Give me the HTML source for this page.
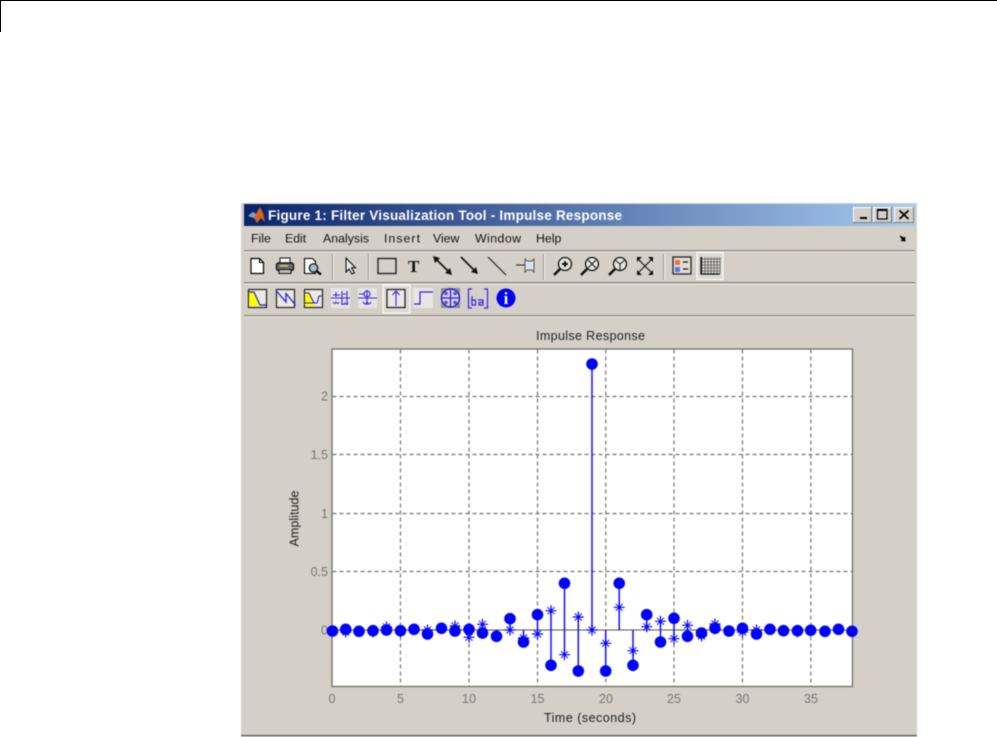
<!DOCTYPE html>
<html><head><meta charset="utf-8"><style>
html,body{margin:0;padding:0;background:#fff;width:997px;height:737px;overflow:hidden}
svg{display:block;filter:blur(0.5px)}
text{font-family:"Liberation Sans",sans-serif}
.k{position:absolute;background:#000;left:0;top:0}
</style></head><body>
<svg width="997" height="737" viewBox="0 0 997 737" xmlns="http://www.w3.org/2000/svg">
<defs>
<linearGradient id="t" x1="0" x2="1" y1="0" y2="0"><stop offset="0" stop-color="#0a246a"/><stop offset="1" stop-color="#a6caf0"/></linearGradient>
<g id="a"><path d="M-5.500 0H5.500M0 -5.500V5.500" stroke="#0000ff" stroke-width="1.200" fill="none"/><path d="M-3.500 -3.500L3.500 3.500M3.500 -3.500L-3.500 3.500" stroke="#0000ff" stroke-width="1" fill="none"/></g>
</defs>
<rect x="241" y="203" width="676" height="534" fill="#d4d0c8"/>
<rect x="244" y="204" width="671" height="22" fill="url(#t)"/>
<!-- logo -->
<rect x="246" y="206" width="19" height="18" fill="#0a246a"/>
<path d="M248 216 L253 212 L256 214 L260 207 L263 213 L265 222 L261 218 L257 223 L254 218 Z" fill="#d8641c"/>
<path d="M248 216 L253 212 L256 214 L254 218 Z" fill="#7f9fd0"/>
<text x="268" y="220" font-size="13.500" font-weight="bold" fill="#fff" textLength="354" lengthAdjust="spacing">Figure 1: Filter Visualization Tool - Impulse Response</text>
<!-- window buttons -->
<g>
<rect x="853" y="207" width="19" height="16" fill="#808080"/><rect x="853" y="207" width="18" height="15" fill="#fff"/><rect x="854" y="208" width="17" height="14" fill="#d4d0c8"/><rect x="860" y="217" width="7" height="2" fill="#000"/>
<rect x="873" y="207" width="19" height="16" fill="#808080"/><rect x="873" y="207" width="18" height="15" fill="#fff"/><rect x="874" y="208" width="17" height="14" fill="#d4d0c8"/><rect x="877.500" y="209.500" width="9.500" height="9.500" fill="none" stroke="#000" stroke-width="1.200"/><rect x="877" y="209" width="10" height="2" fill="#000"/>
<rect x="894" y="207" width="20" height="16" fill="#808080"/><rect x="894" y="207" width="19" height="15" fill="#fff"/><rect x="895" y="208" width="18" height="14" fill="#d4d0c8"/><path d="M899.500 210.500l9 8.500M908.500 210.500l-9 8.500" stroke="#000" stroke-width="1.700"/>
</g>
<!-- menu -->
<g font-size="12.300" fill="#111">
<text x="251" y="242.300">File</text><text x="285" y="242.300">Edit</text><text x="323" y="242.300" textLength="46" lengthAdjust="spacing">Analysis</text><text x="384" y="242.300" textLength="36" lengthAdjust="spacing">Insert</text><text x="433" y="242.300">View</text><text x="475" y="242.300" textLength="46" lengthAdjust="spacing">Window</text><text x="536" y="242.300">Help</text>
</g>
<path d="M900 235.500l4 2 1-1 .5 5-5-.5 1.500-1.500-2-2.500z" fill="#000"/>
<!-- separators -->
<rect x="244" y="250" width="671" height="1.300" fill="#85827c"/><rect x="244" y="251.300" width="671" height="1" fill="#eeece6"/>
<rect x="244" y="282" width="671" height="1.300" fill="#85827c"/><rect x="244" y="283.500" width="671" height="1" fill="#f4f2ec"/>
<rect x="244" y="315" width="671" height="1.300" fill="#85827c"/><rect x="244" y="316.300" width="671" height="1" fill="#eeece6"/>
<rect x="241" y="735" width="676" height="1.200" fill="#55544f"/>
<rect x="332" y="254" width="1" height="26" fill="#96938c"/><rect x="333" y="254" width="1" height="26" fill="#f5f3ee"/>
<rect x="368" y="254" width="1" height="26" fill="#96938c"/><rect x="369" y="254" width="1" height="26" fill="#f5f3ee"/>
<rect x="543" y="254" width="1" height="26" fill="#96938c"/><rect x="544" y="254" width="1" height="26" fill="#f5f3ee"/>
<rect x="663" y="254" width="1" height="26" fill="#96938c"/><rect x="664" y="254" width="1" height="26" fill="#f5f3ee"/>
<!-- toolbar 1 -->
<path d="M251 258.500h8.500l4 4v11h-12.500z" fill="#fff" stroke="#000" stroke-width="1.200"/><path d="M259.500 258.500v4h4" fill="none" stroke="#000"/>
<g stroke="#111"><rect x="280" y="258" width="10" height="6" fill="#fff"/><rect x="276.500" y="263" width="17" height="7.500" rx="2" fill="#6e6e6e" stroke-width="1.400"/><rect x="279" y="269.500" width="12" height="4" fill="#bbb"/></g><rect x="280" y="265" width="8" height="1.500" fill="#e6d040"/>
<path d="M304.500 258.500h8l3 3v12h-11z" fill="#fff" stroke="#000" stroke-width="1.100"/><circle cx="313.500" cy="268" r="4.200" fill="#a0c4cc" stroke="#222" stroke-width="1.400"/><path d="M316.500 271l4.500 3.500" stroke="#000" stroke-width="2.200"/>
<path d="M346 258l0 14 3-3 3 5 2.500-1.200-3-5 4 0z" fill="#e8e8e8" stroke="#000" stroke-width="1"/>
<rect x="378" y="258.500" width="18" height="15" fill="none" stroke="#222" stroke-width="1.400"/>
<text x="408" y="272" style="font-family:'Liberation Serif',serif" font-size="17" font-weight="bold" fill="#111">T</text>
<g stroke="#111" fill="#111"><path d="M434 257l17 17" stroke-width="1.600"/><path d="M433 256l7 2-5 5zM452 275l-7-2 5-5z" stroke="none"/>
<path d="M461 257l16 16" stroke-width="1.600"/><path d="M478 274l-7-2 5-5z" stroke="none"/>
<path d="M488 257l18 18" stroke-width="1.200" stroke="#222"/></g>
<path d="M516 265h10" stroke="#222"/><path d="M525 259l2 2h5l2-2v13l-2-2h-5l-2 2z" fill="#dde4ee" stroke="#555"/>
<g fill="none" stroke="#111"><circle cx="565" cy="264" r="6.500" stroke-width="1.300" fill="#e8e6e0"/><path d="M560 269l-6 6" stroke-width="2.600"/><path d="M562 264h6M565 261v6" stroke-width="1.900"/>
<circle cx="592" cy="264" r="6.500" stroke-width="1.300" fill="#e8e6e0"/><path d="M587 269l-6 6" stroke-width="2.600"/><path d="M588 260l8 8M596 260l-8 8"/>
<circle cx="620" cy="264" r="6.500" stroke-width="1.300" fill="#e8e6e0"/><path d="M615 269l-6 6" stroke-width="2.600"/><path d="M620 264v6M620 264l-5-4M620 264l5-4"/>
<path d="M637 258l16 16M653 258l-16 16" stroke-width="1.100"/></g>
<path d="M637 257h5l-5 5zM653 257h-5l5 5zM637 275h5l-5-5zM653 275h-5l5-5z" fill="#111"/>
<!-- legend -->
<rect x="673" y="257" width="18" height="17" fill="#e0ddd6" stroke="#222" stroke-width="1.300"/><rect x="675" y="260" width="5" height="5" fill="#e8743c"/><rect x="675" y="267" width="5" height="5" fill="#5c74d8"/><path d="M683 262h5M683 269h5" stroke="#111" stroke-width="1.200"/>
<!-- grid button -->
<rect x="697" y="252.500" width="26" height="27" fill="#dedbd4" stroke="#fff"/>
<g stroke="#555" stroke-width=".8"><path d="M702 257v16M705 257v16M708 257v16M711 257v16M714 257v16M717 257v16M720 257v16M701 259h19M701 262h19M701 265h19M701 268h19M701 271h19"/></g><path d="M701 257v17h19" fill="none" stroke="#000" stroke-width="1.300"/>
<!-- toolbar 2 -->
<rect x="248.500" y="289.500" width="18" height="18" fill="#ece9e2" stroke="#222" stroke-width="1.200"/><path d="M249 292h5l6 14h-11z" fill="#ffff00"/><path d="M249 292h5l6 13h6" fill="none" stroke="#2222d0" stroke-width="1.200"/>
<rect x="276.500" y="289.500" width="18" height="18" fill="#ece9e2" stroke="#222" stroke-width="1.200"/><path d="M276 290.500l10 11.500v-8.500l9.500 11.500" fill="none" stroke="#2222d0" stroke-width="1.300"/>
<rect x="304.500" y="289.500" width="18" height="18" fill="#ece9e2" stroke="#222" stroke-width="1.200"/><path d="M305 292h4l6 14h-10z" fill="#ffff00"/><path d="M305 293h4l5 10h3l2-7h3M305 303h9" fill="none" stroke="#2222d0" stroke-width="1.100"/>
<rect x="331" y="288" width="19" height="20" fill="#e6e4e2"/>
<g stroke="#3a22e8" fill="none" stroke-width="1.100"><path d="M331 298h19M342 291v14M347 291v14M336 292v5M333 295h7M343 294h3M333 302q2 3 3 0q2 3 3 0M342 303q2 3 3 0q2 3 3 0"/></g>
<rect x="358" y="288" width="19" height="20" fill="#e6e4e2"/>
<g stroke="#3a22e8" fill="none" stroke-width="1.100"><path d="M358 298h19M367 290v15M359 294h6M364 294a3 3 0 1 0 6 0a3 3 0 1 0-6 0M363 302q2 4 4 0q2 4 4 0"/></g>
<rect x="383" y="285" width="27" height="28" fill="#dedbd4" stroke="#fff"/><rect x="387" y="289.500" width="18" height="18" fill="#ece9e2" stroke="#222" stroke-width="1.300"/><path d="M396 306v-15M392.500 295l3.500-4 3.500 4" fill="none" stroke="#3a22e8" stroke-width="1.100"/>
<rect x="413" y="288" width="20" height="20" fill="#e8e6e2"/><path d="M414 304h6v-12h13" fill="none" stroke="#3a22e8" stroke-width="1.300"/>
<rect x="441" y="288" width="19" height="20" fill="#8f8f8f"/><circle cx="450.500" cy="298" r="9" fill="#d8d6f0" stroke="#2a18e0" stroke-width="1.400"/><path d="M450.500 289v18M441.500 298h18" stroke="#2a18e0" stroke-width="1.300"/><g fill="#5a50b0"><circle cx="446" cy="293.500" r="1.800"/><circle cx="455" cy="293.500" r="1.800"/><circle cx="446" cy="302.500" r="1.800"/><circle cx="455" cy="302.500" r="1.800"/></g>
<g fill="none" stroke="#3a22e8" stroke-width="1.200"><path d="M472 289h-3.500v19h3.500M484 289h3.500v19h-3.500"/><path d="M472 296v9h3.500v-5h-3.500M478 300h5v5h-4v-2.500h4"/></g>
<circle cx="506" cy="298" r="9.500" fill="#0000f0"/><text x="506" y="304" font-size="17" font-weight="bold" fill="#fff" text-anchor="middle" style="font-family:'Liberation Serif',serif">i</text>
<!-- axes -->
<text x="536" y="340" font-size="12.500" fill="#222" textLength="109" lengthAdjust="spacing">Impulse Response</text>
<rect x="332" y="349" width="520.500" height="337.500" fill="#fff" stroke="#77766f" stroke-width="1.400"/>
<g font-size="12.500" fill="#77766f">
<text x="328" y="400.500" text-anchor="end">2</text>
<text x="328" y="459" text-anchor="end">1.5</text>
<text x="328" y="518" text-anchor="end">1</text>
<text x="328" y="576" text-anchor="end">0.5</text>
<text x="328" y="634.500" text-anchor="end">0</text>
<text x="332" y="703" text-anchor="middle">0</text>
<text x="400.500" y="703" text-anchor="middle">5</text>
<text x="469" y="703" text-anchor="middle">10</text>
<text x="537.500" y="703" text-anchor="middle">15</text>
<text x="606" y="703" text-anchor="middle">20</text>
<text x="674" y="703" text-anchor="middle">25</text>
<text x="742.500" y="703" text-anchor="middle">30</text>
<text x="811" y="703" text-anchor="middle">35</text>
</g>
<text x="544" y="722" font-size="12.500" fill="#222" textLength="92" lengthAdjust="spacing">Time (seconds)</text>
<text transform="translate(298.500 518.500) rotate(-90)" font-size="12.500" fill="#222" text-anchor="middle" textLength="56" lengthAdjust="spacing">Amplitude</text>
<path d="M400.500 349.500V686M469 349.500V686M537.500 349.500V686M605.800 349.500V686M674 349.500V686M742.500 349.500V686M810.800 349.500V686M332.500 396.500H852M332.500 454.500H852M332.500 513.500H852M332.500 571.500H852" stroke="#77766f" stroke-width="1.200" stroke-dasharray="4 3" fill="none"/>
<path d="M332.500 630H852" stroke="#55544f" stroke-width="1.100"/>
<path fill="none" stroke="#1010ff" stroke-width="1.500" d="M469 629V637M482.500 624V633M496.500 630V636M510 630V619M523.500 630V642M537.500 634V615M551 611V665M564.500 583V655M578.300 617V671M592 630V364M605.700 630V671M619.200 630V583M633 630V665M646.700 630V615M660.500 621V642M674 618V639M687.500 625V636M701.500 630V635"/>
<g>
<use href="#a" x="345.700" y="632"/><use href="#a" x="373" y="632"/><use href="#a" x="386.500" y="627"/><use href="#a" x="400.500" y="632"/><use href="#a" x="427.500" y="630"/><use href="#a" x="455" y="626"/><use href="#a" x="469" y="637.300"/><use href="#a" x="482.500" y="624.300"/><use href="#a" x="510" y="630"/><use href="#a" x="523.500" y="638"/><use href="#a" x="537.500" y="634"/><use href="#a" x="551" y="610.700"/><use href="#a" x="564.500" y="654.700"/><use href="#a" x="578.300" y="617"/><use href="#a" x="592" y="630"/><use href="#a" x="605.700" y="643.300"/><use href="#a" x="619.200" y="607.300"/><use href="#a" x="633" y="650.700"/><use href="#a" x="646.700" y="626.700"/><use href="#a" x="660.500" y="621.300"/><use href="#a" x="674" y="638.700"/><use href="#a" x="687.500" y="625.300"/><use href="#a" x="701.500" y="636"/><use href="#a" x="715" y="624"/><use href="#a" x="742.500" y="632"/><use href="#a" x="756.500" y="630"/><use href="#a" x="797.500" y="632"/>
</g>
<g fill="#0000ff">
<circle cx="332.500" cy="631" r="5.800"/><circle cx="345.700" cy="629.300" r="5.800"/><circle cx="359" cy="631.300" r="5.800"/><circle cx="373" cy="630.700" r="5.800"/><circle cx="386.500" cy="630" r="5.800"/><circle cx="400.500" cy="630.700" r="5.800"/><circle cx="414" cy="629.300" r="5.800"/><circle cx="427.500" cy="634" r="5.800"/><circle cx="441.500" cy="628.300" r="5.800"/><circle cx="455" cy="631" r="5.800"/><circle cx="469" cy="629.300" r="5.800"/><circle cx="482.500" cy="633" r="5.800"/><circle cx="496.500" cy="636.300" r="5.800"/><circle cx="510" cy="618.700" r="5.800"/><circle cx="523.500" cy="642" r="5.800"/><circle cx="537.500" cy="614.700" r="5.800"/><circle cx="551" cy="665.300" r="5.800"/><circle cx="564.500" cy="583.300" r="5.800"/><circle cx="578.300" cy="671" r="5.800"/><circle cx="592" cy="364" r="5.800"/><circle cx="605.700" cy="671" r="5.800"/><circle cx="619.200" cy="583.300" r="5.800"/><circle cx="633" cy="665.300" r="5.800"/><circle cx="646.700" cy="614.700" r="5.800"/><circle cx="660.500" cy="642" r="5.800"/><circle cx="674" cy="618.300" r="5.800"/><circle cx="687.500" cy="636.300" r="5.800"/><circle cx="701.500" cy="633" r="5.800"/><circle cx="715" cy="628.300" r="5.800"/><circle cx="729" cy="631" r="5.800"/><circle cx="742.500" cy="628.300" r="5.800"/><circle cx="756.500" cy="634" r="5.800"/><circle cx="770" cy="629.300" r="5.800"/><circle cx="783.500" cy="630.700" r="5.800"/><circle cx="797.500" cy="630.700" r="5.800"/><circle cx="810.700" cy="630.300" r="5.800"/><circle cx="825" cy="631.300" r="5.800"/><circle cx="838.500" cy="629.300" r="5.800"/><circle cx="852" cy="631.300" r="5.800"/>
</g>
</svg>
<div class="k" style="width:997px;height:1px"></div>
<div class="k" style="width:1px;height:32px"></div>
</body></html>
